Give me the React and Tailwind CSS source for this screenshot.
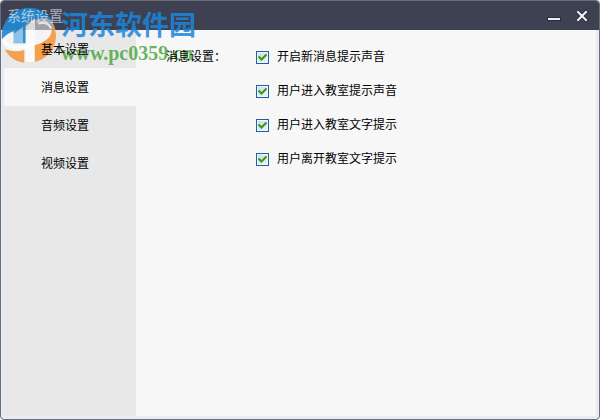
import { useState } from 'react'

const TABS = ['基本设置', '消息设置', '音频设置', '视频设置']

const OPTIONS = [
  { id: 'sound-message', label: '开启新消息提示声音' },
  { id: 'sound-enter', label: '用户进入教室提示声音' },
  { id: 'text-enter', label: '用户进入教室文字提示' },
  { id: 'text-leave', label: '用户离开教室文字提示' },
]

export default function App() {
  const [tab, setTab] = useState('消息设置')

  return (
    <div className="relative flex h-screen flex-col overflow-hidden rounded-[4px] border border-[#6b6e78] bg-[#e6eaf3] font-['Liberation_Sans','Noto_Sans_CJK_SC',sans-serif] text-xs text-black">
      <TitleBar />
      <div className="flex min-h-0 flex-1 px-[3px] pb-[3px]">
        <nav className="flex w-[132px] shrink-0 flex-col bg-[#e8e8e8]">
          {TABS.map((t) => (
            <button
              key={t}
              type="button"
              onClick={() => setTab(t)}
              className={`h-[38px] pt-0.5 pr-2.5 ${t === tab ? 'bg-[#f7f7f7]' : ''}`}
            >
              <span className="relative z-10">{t}</span>
            </button>
          ))}
        </nav>
        <main className="flex-1 bg-[#f7f7f7] pt-[19px] pl-[30px]">
          <fieldset className="flex items-start">
            <span id="group-label" className="relative z-10 w-[90px] leading-4">消息设置：</span>
            <div role="group" aria-labelledby="group-label" className="flex flex-col gap-[18px]">
              {OPTIONS.map((o) => (
                <Option key={o.id} {...o} />
              ))}
            </div>
          </fieldset>
        </main>
      </div>
      <Watermark />
    </div>
  )
}

function TitleBar() {
  return (
    <header className="flex h-[29px] shrink-0 items-center justify-between bg-[#3e4152] pr-2 pl-1.5">
      <h1 className="relative z-10 text-sm text-white/60">系统设置</h1>
      <div className="flex gap-3">
        <button type="button" aria-label="最小化" className="size-4">
          <svg viewBox="0 0 16 16" className="size-4">
            <rect x="0" y="9" width="14" height="4" fill="#2b2d3a" />
            <rect x="1" y="10" width="12" height="2" fill="#e4f1f8" />
          </svg>
        </button>
        <button type="button" aria-label="关闭" className="size-4">
          <svg viewBox="0 0 16 16" className="size-4" fill="none" strokeLinecap="square">
            <path d="M3 4l8 8M11 4l-8 8" stroke="#2b2d3a" strokeWidth="4" />
            <path d="M3 4l8 8M11 4l-8 8" stroke="#f4f6fa" strokeWidth="2" />
          </svg>
        </button>
      </div>
    </header>
  )
}

function Option({ id, label }) {
  return (
    <div className="flex items-center gap-2 leading-4">
      <span className="grid size-[13px]">
        <input
          id={id}
          type="checkbox"
          defaultChecked
          className="peer col-start-1 row-start-1 size-[13px] appearance-none border border-[#1c5fa5] bg-linear-to-br from-[#c6daf0] to-[#eef5fc] shadow-[inset_0_0_0_1px_#f3f8fd]"
        />
        <svg
          viewBox="0 0 13 13"
          fill="none"
          className="pointer-events-none invisible col-start-1 row-start-1 size-[13px] peer-checked:visible"
        >
          <path d="M2.5 5.5L5.5 8.5l5-5" stroke="#3f9a0a" strokeWidth="2.2" />
        </svg>
      </span>
      <label htmlFor={id}>{label}</label>
    </div>
  )
}

// Site mark floating over the top left corner of the window
function Watermark() {
  return (
    <div className="pointer-events-none absolute top-1 left-0 flex items-start gap-1 whitespace-nowrap">
      <svg viewBox="0 0 168 174" className="mt-px h-[58px] w-14 shrink-0">
        <circle cx="84" cy="88" r="81" fill="#fff" opacity=".5" />
        <g opacity=".85">
          {/* blue dome with two slanted towers cut out of it */}
          <path
            d="M3 100C-2 48 34 6 84 5c30 0 56 14 70 40-16-10-34-10-52-3V34L66 64v48H38V76L24 82C14 88 8 94 3 100z"
            fill="#0f7fcc"
          />
          <path d="M66 64l8-6v54h-8z" fill="#0f7fcc" />
          {/* orange base and the crescent on the right */}
          <path d="M12 130c18 6 38 8 58 2v38C44 168 22 152 12 130z" fill="#f39233" />
          <path d="M100 118c18-4 34-12 44-24 8-10 10-24 4-38 12 8 18 20 17 36-2 40-30 68-65 76z" fill="#f39233" />
        </g>
        {/* towers and the ring that crosses them */}
        <path d="M38 84l28-22v50H38z" fill="#fff" opacity=".45" />
        <path d="M74 62l28-24v130H74z" fill="#fff" opacity=".6" />
        <path d="M4 102c20 24 60 28 94 12" fill="none" stroke="#fff" strokeWidth="9" opacity=".7" />
        <path d="M112 52c20-4 34 2 38 16" fill="none" stroke="#fff" strokeWidth="7" opacity=".7" />
      </svg>
      <div>
        <div className="font-['Noto_Sans_CJK_SC',sans-serif] text-[27px] leading-[38px] font-bold text-[#1b86dc]/85">河东软件园</div>
        <div className="font-['Liberation_Serif',serif] text-xl leading-5 font-bold text-[#3fa535]/80">www.pc0359.cn</div>
      </div>
    </div>
  )
}
